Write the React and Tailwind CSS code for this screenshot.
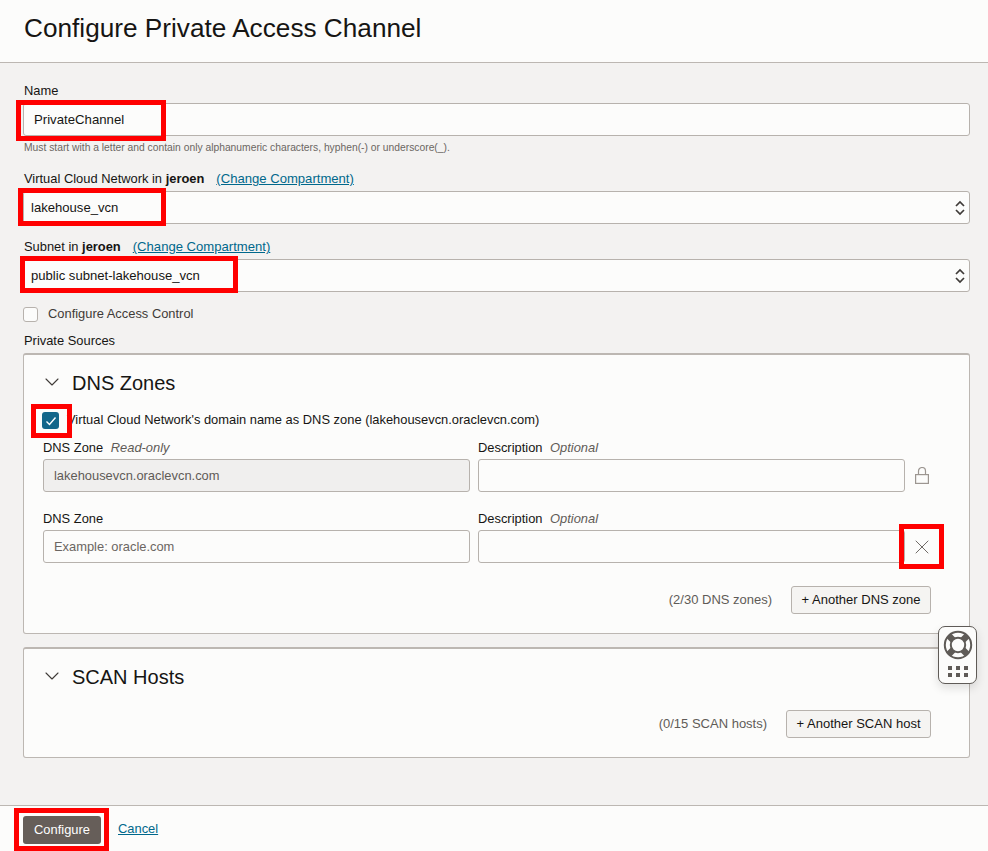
import React from 'react';
import { ChevronDown, X } from 'lucide-react';

const inputClass = 'h-[33px] w-full rounded-[3px] border border-[#b7b2ad] outline-none';

const Label = ({ children, className = '' }) => (
    <div className={`h-4 text-[12.9px] leading-[18px] text-[#161513] ${className}`}>{children}</div>
);

const Optional = ({ children }) => <i className="ml-[4px] text-[#5f5b57]">{children}</i>;

const ChangeLink = () => (
    <a href="#" className="ml-[12px] text-[13.1px] text-[#00688c] underline">(Change Compartment)</a>
);

const SelectField = ({ value }) => (
    <div className="relative h-[33px]">
        <select
            value={value}
            onChange={() => {}}
            className={`${inputClass} appearance-none bg-[#fcfcfb] pl-[7px] text-[13.1px] text-[#161513]`}
        >
            <option value={value}>{value}</option>
        </select>
        <svg viewBox="0 0 10 16" className="pointer-events-none absolute right-[5px] top-[9px] h-4 w-[10px]" fill="none" stroke="#3f3b38" strokeWidth="1.7">
            <path d="M1 6l4-4 4 4" />
            <path d="M1 10l4 4 4-4" />
        </svg>
    </div>
);

const PanelHeading = ({ children }) => (
    <div className="flex h-6 items-center">
        <ChevronDown size={24} strokeWidth={1.1} className="ml-[-3px] mt-[-3px] text-[#3f3b38]" />
        <h2 className="ml-[8px] text-[20px] leading-6 text-[#161513]">{children}</h2>
    </div>
);

const AddRow = ({ count, action, className = '' }) => (
    <div className={`flex items-center justify-end pr-[38px] ${className}`}>
        <span className="mr-[19px] text-[13px] text-[#5f5b57]">{count}</span>
        <button className="h-7 rounded-[3px] border border-[#b7b2ad] bg-[#f5f4f2] px-[9.5px] text-[13px] text-[#161513]">{action}</button>
    </div>
);

const Highlight = ({ className }) => (
    <div className={`pointer-events-none absolute border-[5px] border-[#ff0000] ${className}`} />
);

const LockIcon = () => (
    <svg viewBox="0 0 14 17" className="h-[17px] w-[14px]" fill="none" stroke="#9c9691" strokeWidth="1.2">
        <rect x="0.6" y="7.6" width="12.8" height="8.8" />
        <path d="M3.5 7.5V4a3.5 3.5 0 0 1 7 0v3.5" />
    </svg>
);

const HelpWidget = () => (
    <div className="absolute left-[938px] top-[626px] flex h-[58px] w-[39px] flex-col items-center rounded-[7px] border border-[#5f5b57] bg-[#fcfcfb] shadow-[0_4px_10px_rgba(0,0,0,0.12)]">
        <svg viewBox="0 0 30 30" className="mt-[3px] h-[30px] w-[30px]" fill="none" stroke="#5f5b57">
            <circle cx="15" cy="15" r="13.2" strokeWidth="2" />
            <circle cx="15" cy="15" r="7.2" strokeWidth="2" />
            <path d="M5.8 5.8l4.2 4.2M24.2 5.8L20 10M5.8 24.2l4.2-4.2M24.2 24.2L20 20" strokeWidth="6.5" />
        </svg>
        <div className="mt-[6px] grid grid-cols-3 gap-x-[4px] gap-y-[3px]">
            {[0, 1, 2, 3, 4, 5].map((i) => (
                <div key={i} className="h-1 w-[4px] bg-[#5f5b57]" />
            ))}
        </div>
    </div>
);

export default function App() {
    return (
        <div className="relative flex h-[851px] w-[988px] flex-col overflow-hidden bg-[#f3f2f1] font-['Liberation_Sans',Arial,sans-serif]">
            <header className="h-[63px] shrink-0 border-b border-[#bcb7b2] bg-[#fcfcfb] pl-6 pt-[12px]">
                <h1 className="text-[26.2px] leading-8 text-[#161513]">Configure Private Access Channel</h1>
            </header>

            <main className="flex-1 pl-[23px] pr-[18px] pt-[19px]">
                <Label className="pl-px">Name</Label>
                <input
                    readOnly
                    value="PrivateChannel"
                    className={`${inputClass} mt-[5px] bg-[#fcfcfb] pl-[10px] text-[13.2px] text-[#161513]`}
                />
                <div className="mt-[5px] h-3 pl-px text-[10.3px] leading-[14px] text-[#6b6662]">
                    Must start with a letter and contain only alphanumeric characters, hyphen(-) or underscore(_).
                </div>

                <Label className="mt-[17px] pl-px">
                    Virtual Cloud Network in <b>jeroen</b>
                    <ChangeLink />
                </Label>
                <div className="mt-[5px]"><SelectField value="lakehouse_vcn" /></div>

                <Label className="mt-[14px] pl-px">
                    Subnet in <b>jeroen</b>
                    <ChangeLink />
                </Label>
                <div className="mt-[5px]"><SelectField value="public subnet-lakehouse_vcn" /></div>

                <label className="mt-[14px] flex h-4 items-center">
                    <span className="h-[15px] w-[15px] rounded-[3px] border border-[#b7b2ad] bg-[#fcfcfb]" />
                    <span className="ml-[10px] text-[12.9px] text-[#3f3b38]">Configure Access Control</span>
                </label>

                <Label className="mt-[10px] pl-px">Private Sources</Label>

                <section className="mt-[5px] h-[281px] rounded-[3px] border border-t-2 border-[#bcb7b2] bg-[#fcfcfb] pl-[19px] pt-[16px]">
                    <PanelHeading>DNS Zones</PanelHeading>

                    <label className="mt-[17px] flex h-[17px] items-center">
                        <span className="ml-[-1px] flex h-[17px] w-[17px] items-center justify-center rounded-[3px] bg-[#13668a]">
                            <svg viewBox="0 0 12 12" className="h-3 w-3" fill="none" stroke="#ffffff" strokeWidth="1.4">
                                <path d="M1.5 6.5l3 3 6-7" />
                            </svg>
                        </span>
                        <span className="ml-[8px] mt-[-2px] text-[12.9px] text-[#161513]">Virtual Cloud Network's domain name as DNS zone (lakehousevcn.oraclevcn.com)</span>
                    </label>

                    <div className="mt-[10px] flex gap-2">
                        <div className="w-[427px]">
                            <Label>DNS Zone <Optional>Read-only</Optional></Label>
                            <input
                                readOnly
                                value="lakehousevcn.oraclevcn.com"
                                className={`${inputClass} mt-1 bg-[#f0efee] pl-[10px] text-[12.9px] text-[#5f5b57]`}
                            />
                        </div>
                        <div className="w-[427px]">
                            <Label>Description <Optional>Optional</Optional></Label>
                            <input readOnly className={`${inputClass} mt-1 bg-[#fcfcfb]`} />
                        </div>
                        <div className="ml-[-8px] flex w-[34px] items-end justify-center pb-[8px]">
                            <LockIcon />
                        </div>
                    </div>

                    <div className="mt-[18px] flex gap-2">
                        <div className="w-[427px]">
                            <Label>DNS Zone</Label>
                            <input
                                readOnly
                                placeholder="Example: oracle.com"
                                className={`${inputClass} mt-1 bg-[#fcfcfb] pl-[10px] text-[12.9px] placeholder:text-[#6b6662]`}
                            />
                        </div>
                        <div className="w-[427px]">
                            <Label>Description <Optional>Optional</Optional></Label>
                            <input readOnly className={`${inputClass} mt-1 bg-[#fcfcfb]`} />
                        </div>
                        <div className="ml-[-8px] flex w-[34px] items-end justify-center pb-[4px]">
                            <X size={24} strokeWidth={1} className="text-[#6f6a66]" />
                        </div>
                    </div>

                    <AddRow count="(2/30 DNS zones)" action="+ Another DNS zone" className="mt-[23px]" />
                </section>

                <section className="mt-[13px] h-[111px] rounded-[3px] border border-t-2 border-[#bcb7b2] bg-[#fcfcfb] pl-[19px] pt-[16px]">
                    <PanelHeading>SCAN Hosts</PanelHeading>
                    <AddRow count="(0/15 SCAN hosts)" action="+ Another SCAN host" className="mt-[21px]" />
                </section>
            </main>

            <footer className="flex h-[46px] shrink-0 items-start border-t border-[#bcb7b2] bg-[#fcfcfb] pl-[23px] pt-[10px]">
                <button className="h-7 w-[78px] rounded-[3px] bg-[#665e59] text-[12.9px] text-white">Configure</button>
                <a href="#" className="ml-[17px] mt-[5px] text-[12.9px] leading-4 text-[#00688c] underline">Cancel</a>
            </footer>

            <Highlight className="left-[16px] top-[100px] h-[41px] w-[150px]" />
            <Highlight className="left-[18px] top-[188px] h-[38px] w-[148px]" />
            <Highlight className="left-[20px] top-[256px] h-[37px] w-[218px]" />
            <Highlight className="left-[31px] top-[404px] h-[34px] w-[41px]" />
            <Highlight className="left-[899px] top-[524px] h-[45px] w-[45px]" />
            <Highlight className="left-[14px] top-[808px] h-[43px] w-[95px]" />

            <HelpWidget />
        </div>
    );
}
